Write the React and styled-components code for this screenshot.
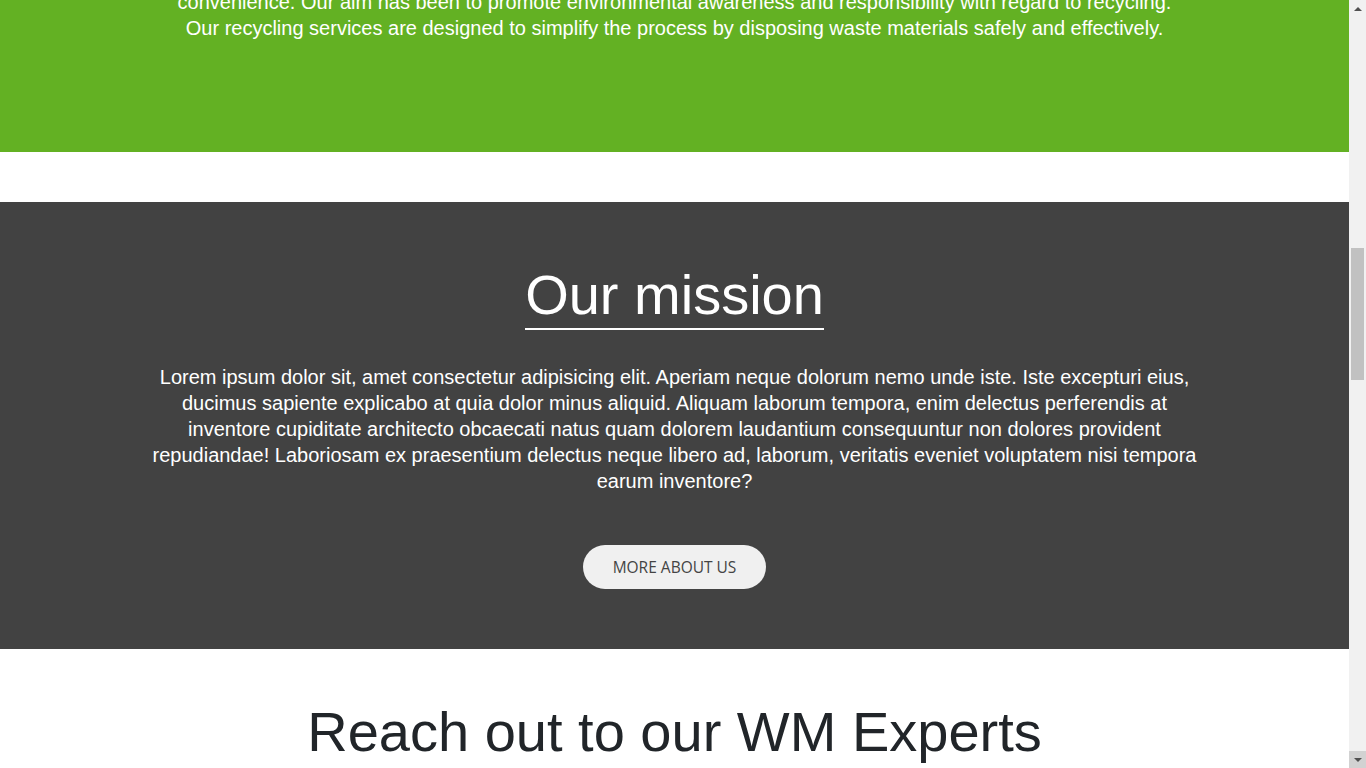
import React, { useLayoutEffect, useRef } from 'react';
import styled, { createGlobalStyle } from 'styled-components';

const GlobalStyle = createGlobalStyle`
  html, body {
    margin: 0;
    padding: 0;
  }

  body {
    font-family: "Liberation Sans", Arial, sans-serif;
    color: #212529;
    background: #fff;
  }

  * {
    box-sizing: border-box;
  }
`;

const StyledPage = styled.div`
  margin-right: 17px;
`;

const Container = styled.div`
  max-width: 1140px;
  margin: 0 auto;
  padding: 0 15px;
`;

const StyledNav = styled.nav`
  height: 70px;
  background: #fff;
  box-shadow: 0 1px 4px rgba(0, 0, 0, 0.1);

  ${Container} {
    height: 100%;
    display: flex;
    align-items: center;
    justify-content: space-between;
  }
`;

const StyledBrand = styled.a`
  font-size: 24px;
  font-weight: 700;
  color: #63b123;
  text-decoration: none;
`;

const StyledNavLinks = styled.ul`
  display: flex;
  gap: 28px;
  list-style: none;
  margin: 0;
  padding: 0;

  a {
    color: #424242;
    text-decoration: none;
    font-size: 16px;
  }
`;

const StyledHero = styled.header`
  min-height: 600px;
  display: flex;
  align-items: center;
  justify-content: center;
  text-align: center;
  color: #fff;
  background: linear-gradient(135deg, #2f3b2a, #4c6b33);

  h1 {
    margin: 0 0 20px;
    font-size: 64px;
    font-weight: 400;
  }

  p {
    margin: 0;
    font-size: 22px;
  }
`;

const StyledServices = styled.section`
  padding: 80px 0;
  text-align: center;
`;

const StyledSectionTitle = styled.h2`
  margin: 0 0 ${({ gap }) => gap || 24}px;
  font-size: 56px;
  line-height: 67px;
  font-weight: 400;
  color: ${({ light }) => (light ? '#fff' : '#212529')};
`;

const StyledCards = styled.div`
  display: grid;
  grid-template-columns: repeat(3, 1fr);
  gap: 30px;
`;

const StyledCard = styled.div`
  height: 220px;
  padding: 30px;
  border-radius: 8px;
  background: #f3f3f3;
  font-size: 18px;
  line-height: 26px;

  h3 {
    margin: 0 0 12px;
    font-size: 24px;
    font-weight: 400;
  }
`;

const StyledAbout = styled.section`
  padding: 60px 0 111px;
  background: #63b123;
  color: #fff;
  text-align: center;
`;

const StyledAboutText = styled.p`
  margin: 0;
  font-size: 20px;
  line-height: 26px;
`;

const StyledMission = styled.section`
  margin-top: 50px;
  padding: 59px 0 60px;
  background: #424242;
  color: #fff;
  text-align: center;
`;

const StyledMissionTitle = styled.h2`
  display: inline-block;
  margin: 0 0 34px;
  font-size: 56px;
  line-height: 67px;
  font-weight: 400;
  border-bottom: 2px solid #fff;
`;

const StyledMissionText = styled.p`
  max-width: 1060px;
  margin: 0 auto 51px;
  font-size: 20px;
  line-height: 26px;
`;

const StyledButton = styled.button`
  height: 44px;
  padding: 0 30px;
  border: none;
  border-radius: 22px;
  background: #f0f0f0;
  color: #444;
  font-family: "Open Sans", "Liberation Sans", sans-serif;
  font-size: 15.5px;
  text-transform: uppercase;
  cursor: pointer;
`;

const StyledReach = styled.section`
  padding: 49px 0 80px;
  text-align: center;
`;

const StyledForm = styled.form`
  max-width: 760px;
  margin: 40px auto 0;
  display: grid;
  grid-template-columns: 1fr 1fr;
  gap: 20px;
  text-align: left;
`;

const StyledInput = styled.input`
  height: 48px;
  padding: 0 16px;
  border: 1px solid #ccc;
  border-radius: 4px;
  font-size: 16px;
  font-family: inherit;
`;

const StyledTextarea = styled.textarea`
  grid-column: 1 / -1;
  height: 220px;
  padding: 16px;
  border: 1px solid #ccc;
  border-radius: 4px;
  font-size: 16px;
  font-family: inherit;
`;

const StyledSubmit = styled(StyledButton)`
  grid-column: 1 / -1;
  justify-self: center;
  background: #63b123;
  color: #fff;
`;

const StyledTestimonials = styled.section`
  padding: 80px 0;
  min-height: 620px;
  background: #f5f5f5;
  text-align: center;
`;

const StyledFooter = styled.footer`
  min-height: 740px;
  padding: 60px 0;
  background: #2b2b2b;
  color: #ccc;
  font-size: 16px;
  line-height: 26px;
`;

/* window scrollbar, drawn over the right edge of the page */
const StyledScrollbar = styled.div`
  position: fixed;
  top: 0;
  right: 0;
  width: 17px;
  height: 100vh;
  display: flex;
  flex-direction: column;
  background: #f1f1f1;
  z-index: 10;
`;

const StyledScrollArrow = styled.div`
  height: 17px;
  flex: none;
  display: flex;
  align-items: center;
  justify-content: center;
  background: ${({ active }) => (active ? '#d2d2d2' : '#f1f1f1')};

  &::after {
    content: '';
    width: 0;
    height: 0;
    border-left: 4px solid transparent;
    border-right: 4px solid transparent;
    ${({ down }) => (down ? 'border-top: 4px solid #505050;' : 'border-bottom: 4px solid #505050;')}
  }
`;

const StyledScrollTrack = styled.div`
  flex: 1;
  padding: 0 2px;
`;

const StyledScrollThumb = styled.div`
  margin-top: 231px;
  height: 132px;
  background: #c1c1c1;
`;

const App = () => {
  const missionRef = useRef(null);

  useLayoutEffect(() => {
    const scroll = () => {
      if (missionRef.current) {
        window.scrollTo(0, missionRef.current.offsetTop - 202);
      }
    };
    scroll();
    requestAnimationFrame(scroll);
  }, []);

  return (
    <>
      <GlobalStyle />
      <StyledPage>
        <StyledNav>
          <Container>
            <StyledBrand href="#">WM Recycling</StyledBrand>
            <StyledNavLinks>
              <li><a href="#">Home</a></li>
              <li><a href="#">Services</a></li>
              <li><a href="#">About</a></li>
              <li><a href="#">Contact</a></li>
            </StyledNavLinks>
          </Container>
        </StyledNav>

        <StyledHero>
          <div>
            <h1>Waste Management made simple</h1>
            <p>Safe, reliable and sustainable recycling for everyone.</p>
          </div>
        </StyledHero>

        <StyledServices>
          <Container>
            <StyledSectionTitle gap={40}>Our services</StyledSectionTitle>
            <StyledCards>
              <StyledCard>
                <h3>Collection</h3>
                Scheduled pickups for homes and businesses.
              </StyledCard>
              <StyledCard>
                <h3>Recycling</h3>
                Sorting and processing of recyclable materials.
              </StyledCard>
              <StyledCard>
                <h3>Disposal</h3>
                Safe disposal of hazardous waste materials.
              </StyledCard>
            </StyledCards>
          </Container>
        </StyledServices>

        <StyledAbout>
          <Container>
            <StyledSectionTitle light>About us</StyledSectionTitle>
            <StyledAboutText>
              We have been providing sustainable waste management solutions with reliability and
              <br />
              convenience. Our aim has been to promote environmental awareness and responsibility with regard to recycling.
              <br />
              Our recycling services are designed to simplify the process by disposing waste materials safely and effectively.
            </StyledAboutText>
          </Container>
        </StyledAbout>

        <StyledMission ref={missionRef}>
          <Container>
            <StyledMissionTitle>Our mission</StyledMissionTitle>
            <StyledMissionText>
              Lorem ipsum dolor sit, amet consectetur adipisicing elit. Aperiam neque dolorum nemo unde iste. Iste
              excepturi eius, ducimus sapiente explicabo at quia dolor minus aliquid. Aliquam laborum tempora, enim
              delectus perferendis at inventore cupiditate architecto obcaecati natus quam dolorem laudantium
              consequuntur non dolores provident repudiandae! Laboriosam ex praesentium delectus neque libero ad,
              laborum, veritatis eveniet voluptatem nisi tempora earum inventore?
            </StyledMissionText>
            <StyledButton type="button">More about us</StyledButton>
          </Container>
        </StyledMission>

        <StyledReach>
          <Container>
            <StyledSectionTitle>Reach out to our WM Experts</StyledSectionTitle>
            <StyledForm>
              <StyledInput placeholder="Name" />
              <StyledInput placeholder="Email" />
              <StyledInput placeholder="Phone" />
              <StyledInput placeholder="Company" />
              <StyledTextarea placeholder="Message" />
              <StyledSubmit type="button">Send message</StyledSubmit>
            </StyledForm>
          </Container>
        </StyledReach>

        <StyledTestimonials>
          <Container>
            <StyledSectionTitle>What our clients say</StyledSectionTitle>
          </Container>
        </StyledTestimonials>

        <StyledFooter>
          <Container>
            WM Recycling &copy; 2024. All rights reserved.
          </Container>
        </StyledFooter>
      </StyledPage>

      <StyledScrollbar>
        <StyledScrollArrow />
        <StyledScrollTrack>
          <StyledScrollThumb />
        </StyledScrollTrack>
        <StyledScrollArrow down active />
      </StyledScrollbar>
    </>
  );
};

export default App;
